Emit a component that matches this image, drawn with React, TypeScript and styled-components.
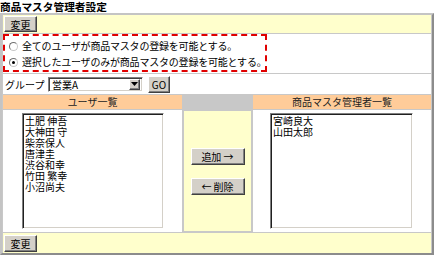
import styled, { createGlobalStyle, css } from 'styled-components';

const GlobalStyle = createGlobalStyle`
  body {
    margin: 0;
    background: #fff;
    font-family: "Noto Sans CJK JP", "Noto Sans", sans-serif;
    font-size: 10px;
    color: #000;
  }
`;

const YELLOW = '#ffffcc';
const ORANGE = '#ffcc99';
const GRID = '#c8c8c8';

const Title = styled.div`
  font-weight: bold;
  font-size: 10.7px;
  line-height: 13px;
  height: 13px;
  white-space: nowrap;
`;

const Panel = styled.div`
  width: 434px;
  box-sizing: border-box;
  border: 2px solid;
  border-color: #c4c4c4 #8c8c8c #8c8c8c #c4c4c4;
  padding: 0 1px;
  background: ${GRID};
  display: flex;
  flex-direction: column;
  gap: 1px;
`;

const Row = styled.div<{ $h: number; $bg?: string }>`
  height: ${(p) => p.$h}px;
  background: ${(p) => p.$bg ?? '#fff'};
  display: flex;
  align-items: center;
  padding-left: 1px;
  box-sizing: border-box;
`;

const TopRow = styled.div`
  height: 39px;
  background: #fff;
`;

const bevel = css`
  background: #d4d0c8;
  border: 1px solid;
  border-color: #fff #404040 #404040 #fff;
  box-shadow: inset -1px -1px 0 #808080;
  box-sizing: border-box;
  font-family: inherit;
  font-size: 10px;
  color: #000;
  padding: 0;
  display: flex;
  align-items: center;
  justify-content: center;
  white-space: nowrap;
  flex-shrink: 0;
`;

const Button = styled.button<{ $w: number; $h?: number }>`
  ${bevel}
  width: ${(p) => p.$w}px;
  height: ${(p) => p.$h ?? 17}px;
`;

const ChoiceBox = styled.div`
  width: 264px;
  height: 38px;
  box-sizing: border-box;
  border: 2px dashed #e00000;
  padding-top: 2px;
`;

const Choice = styled.label`
  display: flex;
  align-items: center;
  height: 16px;
  line-height: 16px;
  padding-left: 4px;
  gap: 4px;
  white-space: nowrap;
  letter-spacing: -0.2px;
`;

const Radio = styled.span<{ $on?: boolean }>`
  flex-shrink: 0;
  width: 9px;
  height: 9px;
  border-radius: 50%;
  box-sizing: border-box;
  border: 1px solid;
  border-color: #707070 #c8c8c8 #c8c8c8 #707070;
  background: #fff;
  display: flex;
  align-items: center;
  justify-content: center;
  &::after {
    content: '';
    width: 3px;
    height: 3px;
    border-radius: 50%;
    background: ${(p) => (p.$on ? '#000' : 'transparent')};
  }
`;

const GroupLabel = styled.span`
  margin-left: 1px;
  width: 43px;
  white-space: nowrap;
`;

const Select = styled.div`
  width: 95px;
  height: 15px;
  box-sizing: border-box;
  border: 1px solid;
  border-color: #808080 #fff #fff #808080;
  box-shadow: inset 1px 1px 0 #404040, inset -1px -1px 0 #d4d0c8;
  display: flex;
  align-items: center;
  justify-content: space-between;
  padding: 0 2px 0 3px;
  margin-right: 5px;
  line-height: 13px;
`;

const SelectArrow = styled.span`
  ${bevel}
  width: 11px;
  height: 11px;
`;

const Grid = styled.div<{ $h: number }>`
  display: grid;
  grid-template-columns: 179px 69px 1fr;
  gap: 1px;
  height: ${(p) => p.$h}px;
`;

const Head = styled.div<{ $bg: string }>`
  background: ${(p) => p.$bg};
  text-align: center;
  line-height: 14px;
  color: #222;
`;

const ListCell = styled.div<{ $indent: number }>`
  background: #fff;
  padding: 3px 0 0 ${(p) => p.$indent}px;
`;

const ListBox = styled.div<{ $w: number }>`
  width: ${(p) => p.$w}px;
  height: 116px;
  box-sizing: border-box;
  border: 1px solid;
  border-color: #808080 #fff #fff #808080;
  box-shadow: inset 1px 1px 0 #202020, inset -1px -1px 0 #d4d0c8;
  padding: 1px 0 0 2px;
`;

const ListItem = styled.div`
  line-height: 11px;
  height: 11px;
  white-space: nowrap;
`;

const MoveCell = styled.div`
  background: ${YELLOW};
  box-shadow: inset 0 0 0 1px ${GRID};
  display: flex;
  flex-direction: column;
  align-items: center;
  justify-content: center;
  gap: 13px;
  padding-top: 1px;
`;

const users = ['土肥 伸吾', '大神田 守', '柴奈保人', '唐津圭', '渋谷和幸', '竹田 繁幸', '小沼尚夫'];
const managers = ['宮崎良大', '山田太郎'];

export default function App() {
  return (
    <>
      <GlobalStyle />
      <Title>商品マスタ管理者設定</Title>
      <Panel>
        <Row $h={18} $bg={YELLOW}>
          <Button $w={33} $h={16}>変更</Button>
        </Row>
        <TopRow>
          <ChoiceBox>
            <Choice>
              <Radio />
              全てのユーザが商品マスタの登録を可能とする。
            </Choice>
            <Choice>
              <Radio $on />
              選択したユーザのみが商品マスタの登録を可能とする。
            </Choice>
          </ChoiceBox>
        </TopRow>
        <Row $h={20}>
          <GroupLabel>グループ</GroupLabel>
          <Select>
            <span>営業A</span>
            <SelectArrow>
              <svg width="7" height="4" viewBox="0 0 7 4">
                <polygon points="0,0 7,0 3.5,4" fill="#000" />
              </svg>
            </SelectArrow>
          </Select>
          <Button $w={22}>GO</Button>
        </Row>
        <Grid $h={14}>
          <Head $bg={ORANGE}>ユーザ一覧</Head>
          <Head $bg={GRID} />
          <Head $bg={ORANGE}>商品マスタ管理者一覧</Head>
        </Grid>
        <Grid $h={122}>
          <ListCell $indent={19}>
            <ListBox $w={142}>
              {users.map((u) => (
                <ListItem key={u}>{u}</ListItem>
              ))}
            </ListBox>
          </ListCell>
          <MoveCell>
            <Button $w={54}>追加 →</Button>
            <Button $w={54}>← 削除</Button>
          </MoveCell>
          <ListCell $indent={17}>
            <ListBox $w={143}>
              {managers.map((m) => (
                <ListItem key={m}>{m}</ListItem>
              ))}
            </ListBox>
          </ListCell>
        </Grid>
        <Row $h={20} $bg={YELLOW}>
          <Button $w={33}>変更</Button>
        </Row>
      </Panel>
    </>
  );
}
